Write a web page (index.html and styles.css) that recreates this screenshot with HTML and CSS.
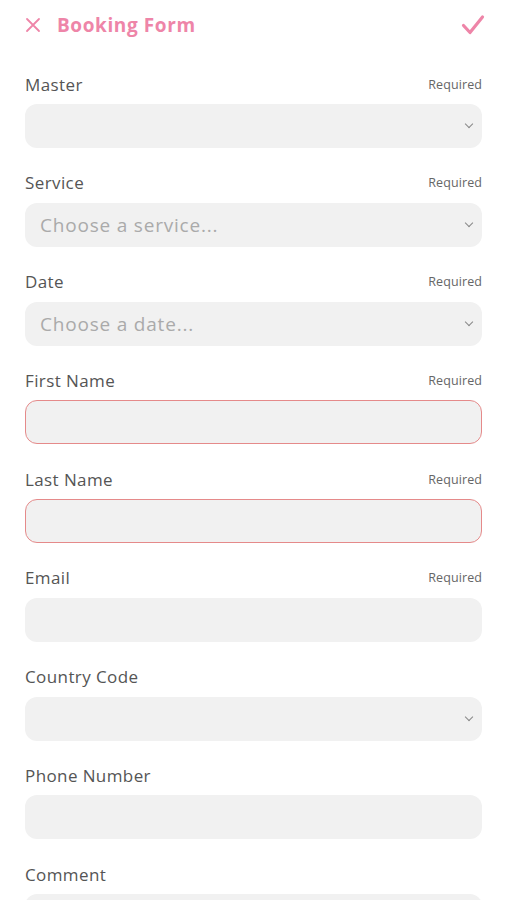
FILE: index.html
```html
<!DOCTYPE html>
<html lang="en">
<head>
    <meta charset="UTF-8">
    <meta name="viewport" content="width=device-width, initial-scale=1.0">
    <title>Booking Form</title>
    <link rel="stylesheet" href="styles.css">
</head>
<body>

    <!-- Header -->
    <div class="header">
        <svg class="close-icon" width="16" height="16" viewBox="0 0 16 16">
            <path d="M2 2 L14 14 M14 2 L2 14" stroke="#ee85a8" stroke-width="1.8" fill="none" stroke-linecap="round"/>
        </svg>
        <h1 class="title">Booking Form</h1>
        <svg class="check-icon" width="24" height="22" viewBox="0 0 24 22">
            <path d="M2.5 11.5 L9 18.5 L21.5 3" stroke="#ee85a8" stroke-width="3.2" fill="none" stroke-linecap="round" stroke-linejoin="round"/>
        </svg>
    </div>

    <form class="form">
        <div class="field">
            <div class="label-row"><label>Master</label><span class="req">Required</span></div>
            <div class="input select"><span></span><span class="chev"></span></div>
        </div>

        <div class="field">
            <div class="label-row"><label>Service</label><span class="req">Required</span></div>
            <div class="input select"><span class="placeholder">Choose a service...</span><span class="chev"></span></div>
        </div>

        <div class="field">
            <div class="label-row"><label>Date</label><span class="req">Required</span></div>
            <div class="input select"><span class="placeholder">Choose a date...</span><span class="chev"></span></div>
        </div>

        <div class="field">
            <div class="label-row"><label>First Name</label><span class="req">Required</span></div>
            <div class="input error"></div>
        </div>

        <div class="field">
            <div class="label-row"><label>Last Name</label><span class="req">Required</span></div>
            <div class="input error"></div>
        </div>

        <div class="field">
            <div class="label-row"><label>Email</label><span class="req">Required</span></div>
            <div class="input"></div>
        </div>

        <div class="field">
            <div class="label-row"><label>Country Code</label></div>
            <div class="input select"><span></span><span class="chev"></span></div>
        </div>

        <div class="field">
            <div class="label-row"><label>Phone Number</label></div>
            <div class="input"></div>
        </div>

        <div class="field">
            <div class="label-row"><label>Comment</label></div>
            <div class="input textarea"></div>
        </div>
    </form>

</body>
</html>
```

FILE: styles.css
```css
body {
    font-family: "Open Sans", Arial, sans-serif;
    background-color: #fff;
    margin: 0;
    padding: 0 25px;
    color: #555;
}

/* Header */
.header {
    display: flex;
    align-items: center;
    height: 50px;
}

.close-icon {
    margin-right: 16px;
}

.title {
    flex: 1;
    margin: 0;
    font-size: 19px;
    font-weight: 700;
    letter-spacing: 0.6px;
    color: #ee85a8;
}

.check-icon {
    margin-right: -3px;
}

/* Form */
.form {
    padding-top: 22px;
}

.field {
    margin-bottom: 22.75px;
}

.label-row {
    display: flex;
    justify-content: space-between;
    align-items: center;
    height: 24px;
    margin-bottom: 8px;
}

.label-row label {
    font-size: 17px;
    letter-spacing: 0.4px;
    color: #555;
}

.req {
    font-size: 12.5px;
    letter-spacing: 0.1px;
    color: #666;
}

.input {
    height: 44px;
    box-sizing: border-box;
    background-color: #f1f1f1;
    border-radius: 12px;
    display: flex;
    align-items: center;
    justify-content: space-between;
    padding: 0 10px 0 15px;
}

.input.error {
    border: 1.5px solid #e58a8a;
}

.textarea {
    height: 90px;
}

.placeholder {
    font-size: 19px;
    letter-spacing: 0.8px;
    color: #aaa;
}

.chev {
    width: 5px;
    height: 5px;
    border-right: 1.2px solid #888;
    border-bottom: 1.2px solid #888;
    transform: rotate(45deg);
    margin-top: -4px;
}
```
